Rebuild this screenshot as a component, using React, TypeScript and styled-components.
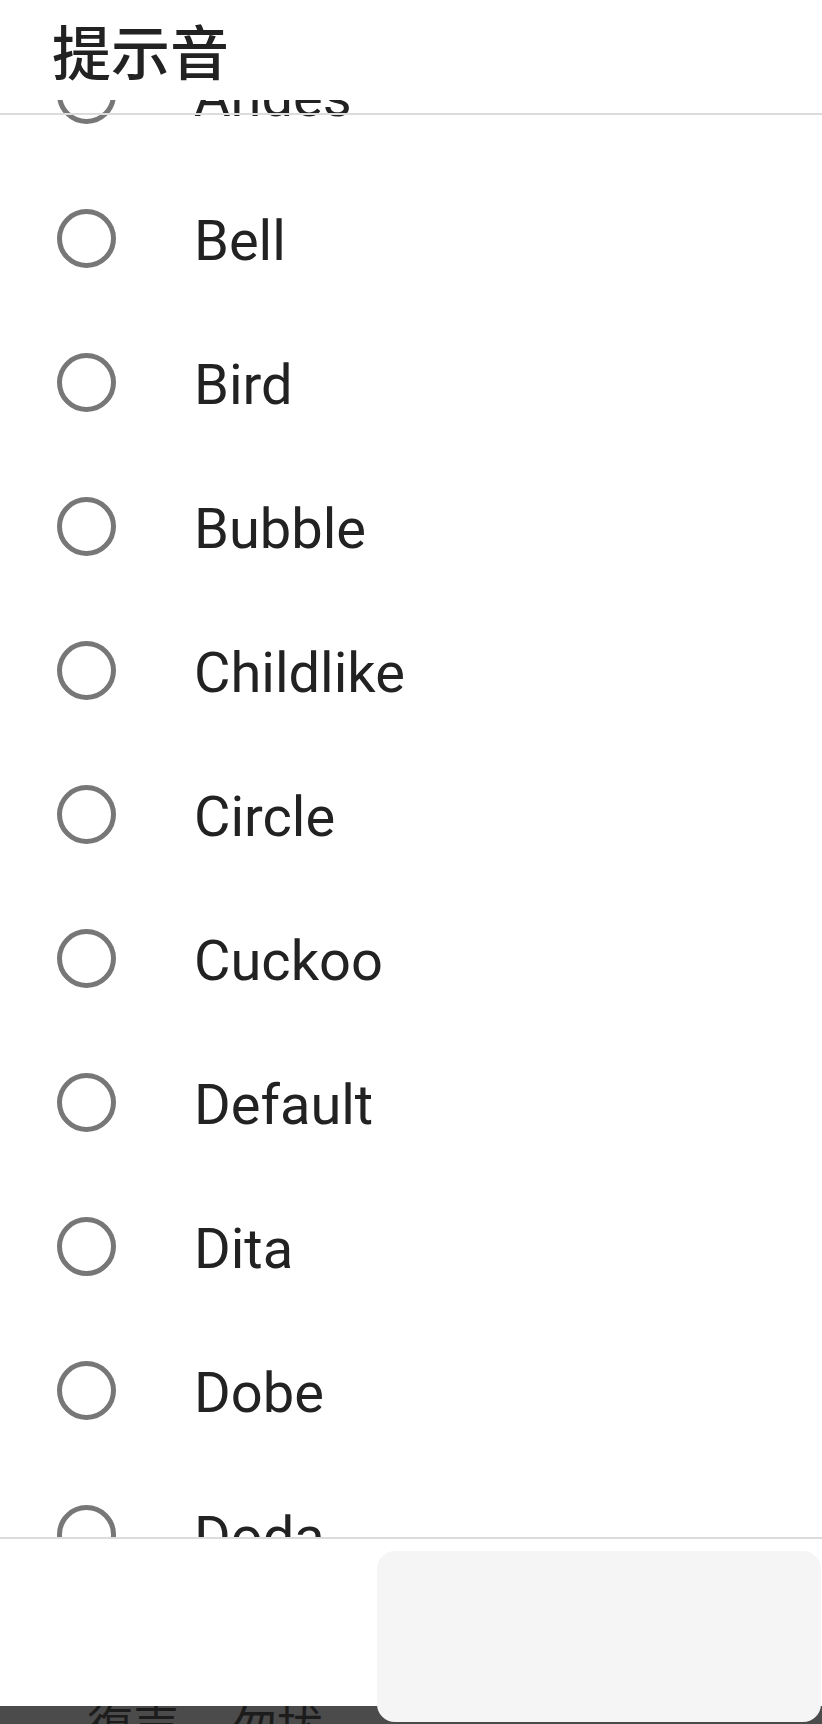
import React from 'react';
import styled, { createGlobalStyle } from 'styled-components';

const GlobalStyle = createGlobalStyle`
  html, body {
    margin: 0;
    padding: 0;
    background: #fff;
  }
  body {
    font-family: Roboto, "Noto Sans CJK SC", sans-serif;
  }
`;

const tones = [
  'Andes', 'Bell', 'Bird', 'Bubble', 'Childlike', 'Circle',
  'Cuckoo', 'Default', 'Dita', 'Dobe', 'Doda', 'Drop',
];

const App = () => {
  return (
    <>
      <GlobalStyle />
      <Page>
        <Header>
          <Title>提示音</Title>
        </Header>
        <ListViewport>
          <ToneList>
            {tones.map((name) => (
              <ToneRow key={name}>
                <Radio />
                <ToneName>{name}</ToneName>
              </ToneRow>
            ))}
          </ToneList>
          <Divider />
        </ListViewport>
        <Footer>
          <FooterBody />
          <BackBar>
            <BackText>復声</BackText>
            <BackText>勿扰</BackText>
          </BackBar>
          <FloatingPanel />
        </Footer>
      </Page>
    </>
  );
};

const Page = styled.div`
  width: 822px;
  height: 1724px;
  display: flex;
  flex-direction: column;
  overflow: hidden;
  background: #fff;
`;

const Header = styled.div`
  height: 100px;
  flex: none;
  display: flex;
  align-items: flex-start;
  padding-left: 52px;
  background: #fff;
  position: relative;
  z-index: 1;
`;

const Title = styled.h1`
  margin: 0;
  margin-top: 15px;
  font-family: "Noto Sans CJK SC", sans-serif;
  font-size: 59px;
  font-weight: 500;
  line-height: 70px;
  color: #222;
`;

const ListViewport = styled.div`
  height: 1437px;
  flex: none;
  position: relative;
  overflow: hidden;
`;

const Divider = styled.div`
  position: absolute;
  top: 13px;
  left: 0;
  right: 0;
  height: 2px;
  background: #dcdcdc;
`;

const ToneList = styled.div`
  display: flex;
  flex-direction: column;
  margin-top: -77.5px;
`;

const ToneRow = styled.div`
  height: 144px;
  display: flex;
  align-items: center;
  padding-left: 57px;
`;

const Radio = styled.span`
  width: 59px;
  height: 59px;
  box-sizing: border-box;
  border: 5px solid #777;
  border-radius: 50%;
  flex: none;
`;

const ToneName = styled.span`
  margin-left: 78px;
  padding-top: 5px;
  font-family: Roboto, sans-serif;
  font-size: 56px;
  color: #222;
  line-height: 1;
`;

const Footer = styled.div`
  flex: 1;
  display: flex;
  flex-direction: column;
  border-top: 2px solid #dcdcdc;
  position: relative;
`;

const FooterBody = styled.div`
  height: 167px;
  background: #fff;
  flex: none;
`;

const BackBar = styled.div`
  flex: 1;
  background: #4b4b4b;
  overflow: hidden;
  display: flex;
  gap: 52px;
  padding-left: 87px;
`;

const BackText = styled.span`
  font-family: "Noto Sans CJK SC", sans-serif;
  font-size: 46px;
  line-height: 46px;
  margin-top: -6px;
  color: #1c1c1c;
`;

const FloatingPanel = styled.div`
  position: absolute;
  top: 12px;
  left: 377px;
  width: 444px;
  height: 171px;
  border-radius: 18px;
  background: #f5f5f5;
`;

export default App;
